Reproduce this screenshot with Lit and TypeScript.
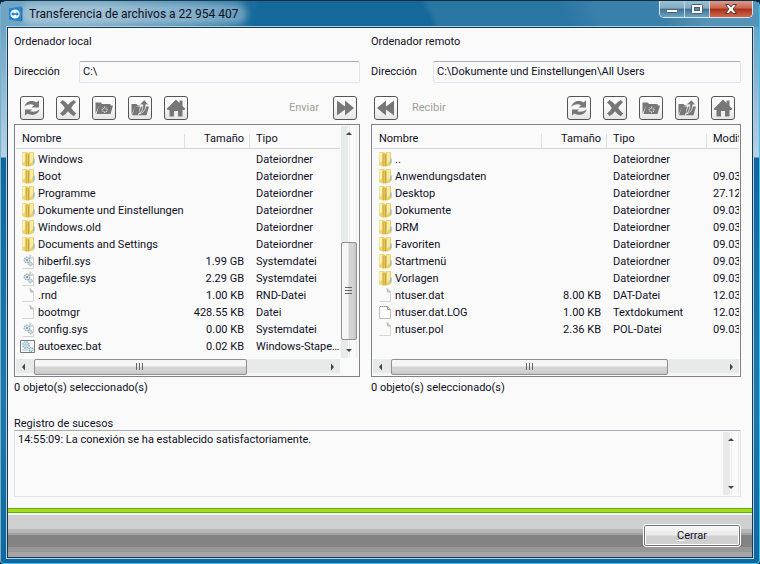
import { LitElement, html, css, svg, nothing } from "lit";
import { customElement, property } from "lit/decorators.js";

type Kind = "folder" | "sys" | "blank" | "text" | "bat";
interface Entry {
  kind: Kind;
  name: string;
  size: string;
  type: string;
  date?: string;
}

const folder = (name: string, date = ""): Entry => ({ kind: "folder", name, size: "", type: "Dateiordner", date });

const LOCAL: Entry[] = [
  folder("Windows"),
  folder("Boot"),
  folder("Programme"),
  folder("Dokumente und Einstellungen"),
  folder("Windows.old"),
  folder("Documents and Settings"),
  { kind: "sys", name: "hiberfil.sys", size: "1.99 GB", type: "Systemdatei" },
  { kind: "sys", name: "pagefile.sys", size: "2.29 GB", type: "Systemdatei" },
  { kind: "blank", name: ".rnd", size: "1.00 KB", type: "RND-Datei" },
  { kind: "blank", name: "bootmgr", size: "428.55 KB", type: "Datei" },
  { kind: "sys", name: "config.sys", size: "0.00 KB", type: "Systemdatei" },
  { kind: "bat", name: "autoexec.bat", size: "0.02 KB", type: "Windows-Stapeldatei" },
];

const REMOTE: Entry[] = [
  folder(".."),
  folder("Anwendungsdaten", "09.03.2007"),
  folder("Desktop", "27.12.2006"),
  folder("Dokumente", "09.03.2007"),
  folder("DRM", "09.03.2007"),
  folder("Favoriten", "09.03.2007"),
  folder("Startmenü", "09.03.2007"),
  folder("Vorlagen", "09.03.2007"),
  { kind: "blank", name: "ntuser.dat", size: "8.00 KB", type: "DAT-Datei", date: "12.03.2007" },
  { kind: "text", name: "ntuser.dat.LOG", size: "1.00 KB", type: "Textdokument", date: "12.03.2007" },
  { kind: "blank", name: "ntuser.pol", size: "2.36 KB", type: "POL-Datei", date: "09.03.2007" },
];

const gears = svg`
  <circle cx="7" cy="7" r="2.800" fill="#dbe9ef" stroke="#8fa8b4" stroke-width="1.2" stroke-dasharray="1.6 .8"/>
  <circle cx="7" cy="7" r="1" fill="#6c8794"/>
  <circle cx="10.5" cy="11" r="1.800" fill="#cfe0e8" stroke="#86a0ac" stroke-width="1" stroke-dasharray="1.2 .7"/>`;

const fileIcons: Record<Kind, unknown> = {
  folder: svg`
    <path d="M2 2q0-1 1-1h4l1 1v13l-1 .8-5-1.600z" fill="#efd677"/>
    <path d="M2.500 2h2.500v8l-2.500 2z" fill="#fbf3bb"/>
    <path d="M5.500 3l2-1v13.500l-2-.5z" fill="#d9b64a"/>
    <path d="M8 2.500l1.500-1.500h3.500q1 0 1 1v12l-4 1.600-2-.6z" fill="#ecd067"/>
    <path d="M10 1.800h3v8l-3 3z" fill="#f8eca4"/>
    <path d="M8 3.500l1.200-1v12.500l-1.200.4z" fill="#c9a53d"/>
    <path d="M14 7.500v5" stroke="#67aed2"/>`,
  sys: svg`
    <path d="M2.500 15.500h11V5l-3-3" fill="none" stroke="#d0d3d6"/>
    <path d="M10 1.500V5h3.500" fill="#eee" stroke="#aaa" stroke-width=".8"/>${gears}`,
  blank: svg`
    <path d="M2.500 14.500h11V5" fill="none" stroke="#d4d4d4"/>
    <path d="M10 1.500l3.500 3.500h-3z" fill="#ddd" stroke="#aaa" stroke-width=".8"/>`,
  text: svg`
    <path d="M2.500 2.500h8l3 3v9h-11z" fill="#fcfcfc" stroke="#bdbdbd"/>
    <path d="M3 2.500h8" stroke="#8f8f8f" stroke-dasharray="1 1"/>
    <path d="M10.500 2.500v3h3" fill="none" stroke="#9a9a9a"/>`,
  bat: svg`
    <path d="M.500 2.500h14v12h-14z" fill="#fafafa" stroke="#777"/>
    <circle cx="6" cy="7" r="3.200" fill="#d7edf7" stroke="#8db3c4" stroke-width="1.4" stroke-dasharray="1.700 .800"/>
    <circle cx="6" cy="7" r="1.200" fill="#fff" stroke="#7398a9" stroke-width=".6"/>
    <circle cx="11" cy="11.500" r="2" fill="#cfe6f1" stroke="#7d9fb0" stroke-width="1.200" stroke-dasharray="1.200 .700"/>
    <path d="M2 12h6" stroke="#a8c4d0"/>`,
};

const toolIcons: Record<string, unknown> = {
  Actualizar: svg`
    <path d="M2.500 8.500C3.500 3.500 10 1.500 14.300 4.500L17 2.500V9.500H9.500L12 7.200C9.500 5.700 6 6 2.500 8.500z"/>
    <path d="M17.500 11.500C16.500 16.500 10 18.500 5.700 15.500L3 17.500V11.500H10.500L8 13C10.500 14.300 14 14 17.500 11.500z"/>`,
  Eliminar: svg`<path d="M2 4.500L4.500 2Q8 3.800 10 6.800Q12.500 3.800 15.800 2L18 4.200Q14.800 6.800 13.200 10Q15.200 13 18.200 15.500L15.800 18.200Q12 16 10 13.200Q8 16.200 4.700 18L2 15.500Q5.300 13 6.800 10Q5.300 7 2 4.500z"/>`,
  "Nueva carpeta": svg`
    <path d="M1.500 15.500V4.500h5.500l1 1.500h8.500V8H5z"/>
    <path d="M5 7.500h14l-2.500 8.500H2.500z"/>
    <path d="M10.700 8.500v6.600M7.500 11.800h6.400M8.500 9.600l4.400 4.400M12.900 9.600l-4.400 4.400" stroke="#ddd" stroke-width="1"/>
    <circle cx="10.700" cy="11.800" r="1.600"/>`,
  "Subir un nivel": svg`
    <path d="M1.500 16.500V6h5l1.500 1.500h3L5 9z"/>
    <path d="M5 8.500h5l-1.500 8.800H2zM11 8.500h8l-2.500 8.800H8.500z"/>
    <path d="M8 16.500Q13.300 14 12.800 6.800H9.500L14.300 1.800L18.500 6.800H15.800Q16.300 14 8 16.500z" stroke="#eee" stroke-width=".8"/>`,
  Inicio: svg`<path d="M10 1.500l3.500 3.500V2.500h3v5.500l3 3-1.300 1H16.500V18.500H12v-5.500H8v5.500H3.500v-6.500H1.800l-1.300-1z"/>`,
  Enviar: svg`<path d="M2 2.500l8 6V2.500l9 7.500-9 7.500v-6L2 17.500z"/>`,
  Recibir: svg`<path d="M18 2.500l-8 6V2.500l-9 7.500 9 7.500v-6l8 6z"/>`,
};

const shared = css`
  :host {
    font: 11px/16px Roboto, "Noto Sans", sans-serif;
    color: #101024;
  }
  button, select, textarea {
    font: inherit;
    color: inherit;
    margin: 0;
  }
`;

@customElement("scroll-strip")
class ScrollStrip extends LitElement {
  @property({ type: Boolean, reflect: true }) vertical = false;
  @property({ type: Number }) start = 0;
  @property({ type: Number }) extent = 0;

  static styles = css`
    :host {
      display: flex;
      box-sizing: border-box;
      height: 16px;
      background: linear-gradient(#e8eaea 0 14px, #f4f4f4 14px);
    }
    :host([vertical]) {
      flex-direction: column;
      width: 16px;
      height: auto;
      background: linear-gradient(90deg, #e8eaea 0 7px, #fafafa 7px 8px, #ebebeb 8px 9px, #fafafa 9px 15px, #ebebeb 15px);
    }
    .arrow {
      width: 16px;
      height: 16px;
      flex: none;
      padding: 0;
      border: 0;
      background: none;
      display: grid;
      place-items: center;
    }
    .track {
      flex: 1;
      display: flex;
      min-width: 0;
      min-height: 0;
    }
    :host([vertical]) .track {
      flex-direction: column;
    }
    .thumb {
      box-sizing: border-box;
      border: 1px solid #8f8f8f;
      border-radius: 2px;
      background: linear-gradient(#f6f6f6 0 6px, #d3d3d3 7px 11px, #c6c6c6);
      display: grid;
      place-items: center;
    }
    :host([vertical]) .thumb {
      background: linear-gradient(90deg, #f6f6f6 0 6px, #d3d3d3 7px 11px, #c6c6c6);
    }
  `;

  render() {
    const tips = this.vertical
      ? ["M2 6l3-3 3 3z", "M2 4l3 3 3-3z"]
      : ["M6 1.500L3 5l3 3.500z", "M4 1.500l3 3.500-3 3.500z"];
    const glyph = (d: string) => html`<svg width="10" height="10"><path d=${d} fill="#444" /></svg>`;
    const axis = this.vertical ? "height" : "width";
    return html`
      <button class="arrow" aria-label="Retroceder">${glyph(tips[0])}</button>
      <div class="track">
        <div style="${axis}:${this.start}%"></div>
        ${this.extent
          ? html`<div class="thumb" style="${axis}:${this.extent}%">
              <svg width="8" height="8">
                <path d=${this.vertical ? "M0 .5h7M0 3.5h7M0 6.5h7" : "M.5 0v7M3.5 0v7M6.500 0v7"} stroke="#666" />
              </svg>
            </div>`
          : nothing}
      </div>
      <button class="arrow" aria-label="Avanzar">${glyph(tips[1])}</button>
    `;
  }
}

@customElement("file-panel")
class FilePanel extends LitElement {
  @property() heading = "";
  @property() path = "";
  @property({ type: Boolean, reflect: true }) remote = false;
  @property({ attribute: false }) entries: Entry[] = [];

  static styles = [
    shared,
    css`
      :host {
        display: flex;
        flex-direction: column;
        min-width: 0;
      }
      h2 {
        margin: 0 0 11px;
        font: inherit;
      }
      .address {
        display: flex;
        align-items: center;
        height: 22px;
      }
      .address label {
        width: 65px;
        flex: none;
      }
      :host([remote]) .address label {
        width: 62px;
      }
      select {
        flex: 1;
        min-width: 0;
        height: 22px;
        padding: 0 3px;
        appearance: none;
        border: 1px solid #e2e3ea;
        border-top-color: #abadb3;
        border-radius: 2px;
        background: #fafafa;
      }
      .tools {
        display: flex;
        align-items: center;
        gap: 12px;
        margin: 13px 3px 4px 6px;
      }
      :host([remote]) .tools {
        flex-direction: row-reverse;
        margin: 13px 6px 4px 3px;
      }
      .group {
        display: flex;
        gap: 12px;
      }
      .tool {
        box-sizing: border-box;
        width: 24px;
        height: 24px;
        padding: 0;
        display: grid;
        place-items: center;
        border: 1px solid #555;
        border-radius: 3px;
        background: linear-gradient(#fff, #f6f6f6 50%, #e6e6e6);
        fill: #777;
      }
      .transfer {
        flex: 1;
        display: flex;
        align-items: center;
        justify-content: flex-end;
        gap: 14px;
        color: #a0a096;
      }
      :host([remote]) .transfer {
        flex-direction: row-reverse;
      }
      .list {
        flex: 1;
        display: flex;
        border: 1px solid #7f828c;
        background: #fafafa;
      }
      .view {
        flex: 1;
        min-width: 0;
        display: flex;
        flex-direction: column;
        justify-content: space-between;
        padding: 0 1px 1px;
      }
      .bar {
        margin: 1px 2px 18px 0;
      }
      table {
        width: 100%;
        table-layout: fixed;
        border-collapse: collapse;
      }
      .w-size { width: 65px; }
      .w-type { width: 90px; }
      :host([remote]) .w-type { width: 100px; }
      .w-date { width: 32px; }
      th, td {
        padding: 0 0 0 6px;
        font-weight: normal;
        text-align: left;
        white-space: nowrap;
        overflow: hidden;
      }
      th {
        height: 24px;
        padding-top: 2px;
        background:
          linear-gradient(#d5d5d5, #d5d5d5) 0 23px / 100% 1px no-repeat,
          linear-gradient(#e0e0e0, #e0e0e0) 100% 9px / 1px 14px no-repeat;
      }
      th:last-child {
        background: linear-gradient(#d5d5d5, #d5d5d5) 0 23px / 100% 1px no-repeat;
      }
      td {
        height: 17px;
      }
      td:nth-child(3) {
        text-overflow: ellipsis;
      }
      .size {
        text-align: right;
        padding-right: 6px;
      }
      .name {
        display: flex;
        align-items: center;
        height: 17px;
        gap: 1px;
      }
      .name svg {
        flex: none;
        margin-left: -2px;
      }
      .status {
        margin-top: 3px;
      }
    `,
  ];

  private tool(name: string) {
    return html`<button class="tool" aria-label=${name}>
      <svg width="20" height="20">${toolIcons[name]}</svg>
    </button>`;
  }

  render() {
    const action = this.remote ? "Recibir" : "Enviar";
    return html`
      <h2>${this.heading}</h2>
      <div class="address">
        <label for="dir">Dirección</label>
        <select id="dir"><option>${this.path}</option></select>
      </div>
      <div class="tools">
        <div class="group">
          ${["Actualizar", "Eliminar", "Nueva carpeta", "Subir un nivel", "Inicio"].map((n) => this.tool(n))}
        </div>
        <div class="transfer"><span>${action}</span>${this.tool(action)}</div>
      </div>
      <div class="list">
        <div class="view">
          <table>
            <colgroup>
              <col /><col class="w-size" /><col class="w-type" />
              ${this.remote ? html`<col class="w-date" />` : nothing}
            </colgroup>
            <thead>
              <tr>
                <th>Nombre</th>
                <th class="size">Tamaño</th>
                <th>Tipo</th>
                ${this.remote ? html`<th>Modificado</th>` : nothing}
              </tr>
            </thead>
            <tbody>
              ${this.entries.map(
                (e) => html`<tr>
                  <td>
                    <div class="name"><svg width="17" height="17">${fileIcons[e.kind]}</svg>${e.name}</div>
                  </td>
                  <td class="size">${e.size}</td>
                  <td>${e.type}</td>
                  ${this.remote ? html`<td>${e.date}</td>` : nothing}
                </tr>`
              )}
            </tbody>
          </table>
          <scroll-strip start="0.6" extent=${this.remote ? 83 : 73}></scroll-strip>
        </div>
        ${this.remote ? nothing : html`<scroll-strip class="bar" vertical start="50" extent="49"></scroll-strip>`}
      </div>
      <div class="status">0 objeto(s) seleccionado(s)</div>
    `;
  }
}

@customElement("app-root")
class AppRoot extends LitElement {
  static styles = [
    shared,
    css`
      :host {
        display: block;
        background: #06223a;
      }
      .window {
        box-sizing: border-box;
        min-height: 100vh;
        display: flex;
        flex-direction: column;
        padding: 0 6px 5px 6px;
        border: 1px solid #33c8f4;
        border-top-color: #0b2c42;
        border-left-color: #6fb4d2;
        border-radius: 6px 6px 4px 4px;
        background:
          linear-gradient(100deg, #ffffff66 0 90px, #ffffff38 190px, #ffffff00 255px) 0 0 / 100% 26px no-repeat,
          linear-gradient(65deg, #ffffff00 0 56%, #ffffff18 57% 74%, #ffffff28 78% 86%, #ffffff48 92%) 0 0 / 100% 26px no-repeat,
          linear-gradient(#1c6d9b00 0 26px, #6fa3c4 26px, #b9d0e2 156px, #12669c 157px, #2277aa 70%, #12669c);
        background-color: #14689a;
      }
      .title {
        display: flex;
        align-items: center;
        height: 26px;
        padding-left: 1px;
      }
      .title h1 {
        margin: 0 auto 0 1px;
        padding: 0 4px;
        font: 12px/14px Roboto, "Noto Sans", sans-serif;
        border-radius: 7px;
        background: #ffffff50;
        box-shadow: 0 0 6px 4px #ffffff50;
      }
      .title > svg {
        flex: none;
      }
      .controls {
        align-self: flex-start;
        display: flex;
        border: 1px solid #d4e6f0;
        border-top: 0;
        border-radius: 0 0 5px 5px;
        overflow: hidden;
      }
      .controls button {
        box-sizing: border-box;
        width: 25px;
        height: 16px;
        padding: 0;
        border: 0;
        border-right: 1px solid #c5dbe8;
        display: grid;
        place-items: center;
        background: linear-gradient(#9fbfd2, #82abc5 45%, #3d718f 50%, #6fa3c0);
      }
      .controls .close {
        width: 42px;
        border-right: 0;
        background: linear-gradient(#dc9b8d, #c9654f 45%, #a92d18 50%, #d0694b);
      }
      .client {
        flex: 1;
        display: flex;
        flex-direction: column;
        border: 1px solid #17384d;
        outline: 1px solid #a9d3e8;
        background: #fafafa;
      }
      .panels {
        flex: 1;
        display: grid;
        grid-template-columns: 346fr 370fr;
        gap: 11px;
        padding: 6px 11px 0 6px;
      }
      .log {
        display: flex;
        flex-direction: column;
        padding: 21px 11px 11px 6px;
      }
      .log label {
        line-height: 13px;
      }
      .box {
        display: flex;
        border: 1px solid #e2e3ea;
        border-top-color: #abadb3;
        padding: 1px;
        height: 63px;
      }
      textarea {
        flex: 1;
        padding: 0 2px;
        border: 0;
        resize: none;
        background: none;
        overflow: hidden;
      }
      footer {
        display: flex;
        justify-content: flex-end;
        padding: 16px 11px 10px;
        background: linear-gradient(
          #62ad10 0 1px, #a6dc1e 1px 4px, #62ad10 4px 5px, #f4f4f4 5px 7px,
          #d0d0d0 7px 21px, #b5b5b5 21px 25px, #a0a0a0 25px 27px, #838383 27px 39px,
          #979797 39px 44px, #a6a6a6 44px);
      }
      .cerrar {
        width: 98px;
        height: 23px;
        padding: 0;
        border: 1px solid #fff;
        border-radius: 3px;
        box-shadow: inset 0 0 0 1px #707070, inset 0 0 0 2px #fafafa;
        background: linear-gradient(#f4f4f4 0 6px, #ebebeb 6px 10px, #d0d0d0 11px);
      }
      .cerrar u {
        text-decoration-color: #fff;
      }
    `,
  ];

  render() {
    return html`
      <div class="window">
        <header class="title">
          <svg width="16" height="18">
            <path d="M1 3.500L12.500 1.500V16.500L1 14.500z" fill="#1585dc" />
            <path d="M12.500 1.500L14.500 3V15.500L12.500 16.500z" fill="#0a5ca8" />
            <circle cx="7" cy="9" r="4.600" fill="#fff" />
            <path d="M3 9L5.500 7V8.300H8.500V7L11 9L8.500 11V9.700H5.500V11z" fill="#1475c8" />
          </svg>
          <h1>Transferencia de archivos a 22 954 407</h1>
          <div class="controls">
            <button aria-label="Minimizar">
              <svg width="14" height="12"><rect x="1.500" y="6.500" width="11" height="3" rx="1" fill="#fff" stroke="#47606f" /></svg>
            </button>
            <button aria-label="Maximizar">
              <svg width="14" height="12">
                <rect x="1.500" y="1.500" width="11" height="9" rx="1" fill="#fff" stroke="#47606f" />
                <rect x="4.500" y="4.500" width="5" height="3" fill="#5c8dab" stroke="#47606f" />
              </svg>
            </button>
            <button class="close" aria-label="Cerrar ventana">
              <svg width="14" height="12">
                <path d="M1.500 1.500h3.500l2 2.500 2-2.500h3.500L9 6l3.500 4.500H9L7 8l-2 2.500H1.500L5 6z" fill="#fff" stroke="#5b3b3b" />
              </svg>
            </button>
          </div>
        </header>
        <main class="client">
          <div class="panels">
            <file-panel heading="Ordenador local" path="C:\\" .entries=${LOCAL}></file-panel>
            <file-panel remote heading="Ordenador remoto" path="C:\\Dokumente und Einstellungen\\All Users" .entries=${REMOTE}></file-panel>
          </div>
          <div class="log">
            <label for="log">Registro de sucesos</label>
            <div class="box">
              <textarea id="log" readonly .value=${"14:55:09: La conexión se ha establecido satisfactoriamente."}></textarea>
              <scroll-strip vertical></scroll-strip>
            </div>
          </div>
          <footer><button class="cerrar"><u>C</u>errar</button></footer>
        </main>
      </div>
    `;
  }
}
